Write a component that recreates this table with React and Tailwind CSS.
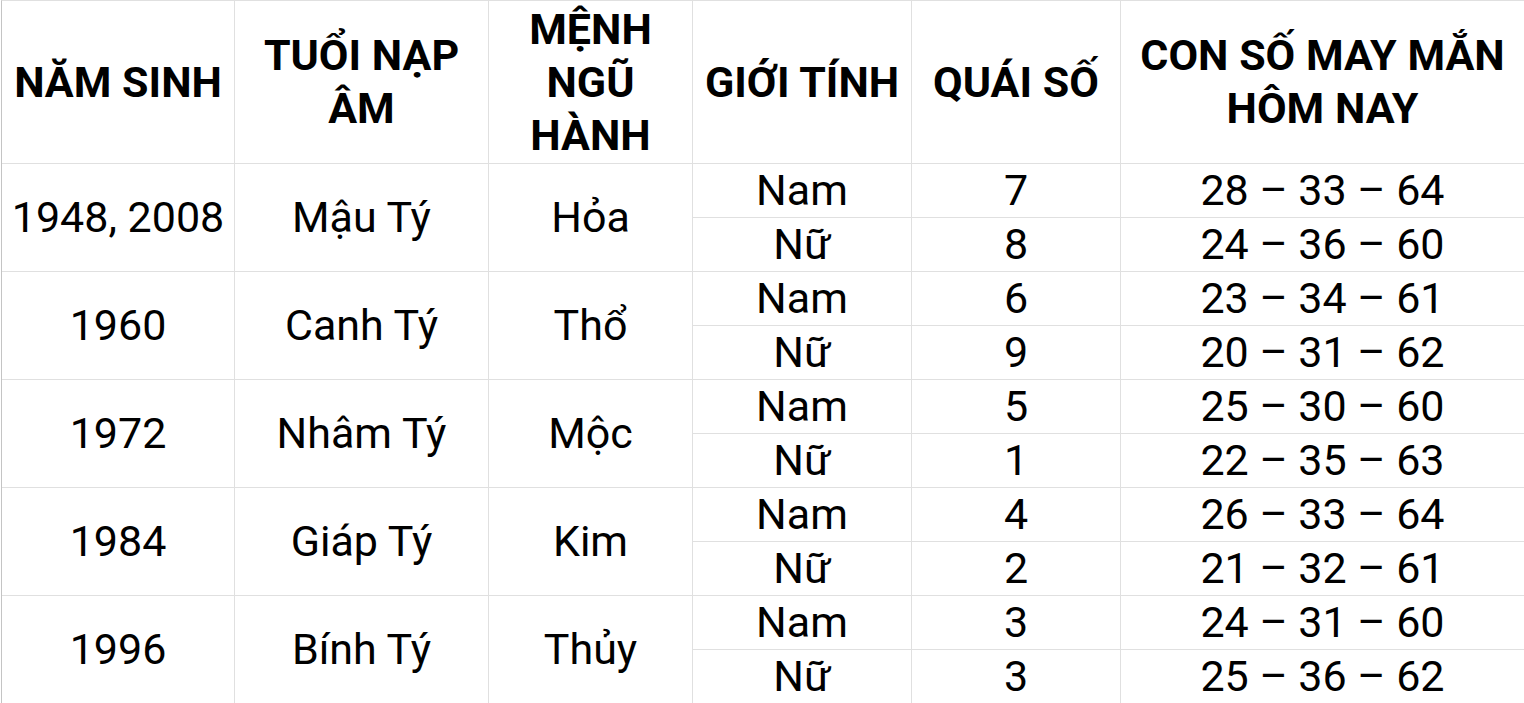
const groups = [
  {
    year: "1948, 2008",
    napAm: "Mậu Tý",
    menh: "Hỏa",
    items: [
      { gender: "Nam", quai: "7", lucky: "28 – 33 – 64" },
      { gender: "Nữ", quai: "8", lucky: "24 – 36 – 60" },
    ],
  },
  {
    year: "1960",
    napAm: "Canh Tý",
    menh: "Thổ",
    items: [
      { gender: "Nam", quai: "6", lucky: "23 – 34 – 61" },
      { gender: "Nữ", quai: "9", lucky: "20 – 31 – 62" },
    ],
  },
  {
    year: "1972",
    napAm: "Nhâm Tý",
    menh: "Mộc",
    items: [
      { gender: "Nam", quai: "5", lucky: "25 – 30 – 60" },
      { gender: "Nữ", quai: "1", lucky: "22 – 35 – 63" },
    ],
  },
  {
    year: "1984",
    napAm: "Giáp Tý",
    menh: "Kim",
    items: [
      { gender: "Nam", quai: "4", lucky: "26 – 33 – 64" },
      { gender: "Nữ", quai: "2", lucky: "21 – 32 – 61" },
    ],
  },
  {
    year: "1996",
    napAm: "Bính Tý",
    menh: "Thủy",
    items: [
      { gender: "Nam", quai: "3", lucky: "24 – 31 – 60" },
      { gender: "Nữ", quai: "3", lucky: "25 – 36 – 62" },
    ],
  },
];

const headers = [
  { lines: ["NĂM SINH"], width: "w-[233px]" },
  { lines: ["TUỔI NẠP", "ÂM"], width: "w-[254px]" },
  { lines: ["MỆNH", "NGŨ", "HÀNH"], width: "w-[204px]" },
  { lines: ["GIỚI TÍNH"], width: "w-[219px]" },
  { lines: ["QUÁI SỐ"], width: "w-[209px]" },
  { lines: ["CON SỐ MAY MẮN", "HÔM NAY"], width: "flex-1 border-r-0" },
];

const cell = "flex shrink-0 items-center justify-center text-center border-b border-r border-[#e0e0e0]";

export default function App() {
  return (
    <div className="h-[703px] w-[1524px] overflow-hidden bg-white pl-px font-['Roboto','Liberation_Sans',sans-serif] text-black">
      <div className="flex flex-col border-l border-t border-l-[#c4c4c4] border-t-[#e0e0e0]">
        <div className="flex h-[163px]">
          {headers.map((h, i) => (
            <div key={i} className={`${cell} ${h.width} flex-col text-[43px] font-bold leading-[53px]`}>
              {h.lines.map((line) => (
                <span key={line}>{line}</span>
              ))}
            </div>
          ))}
        </div>

        {groups.map((g) => (
          <div key={g.year} className="flex h-[108px] text-[43px] leading-none">
            <div className={`${cell} w-[233px]`}>{g.year}</div>
            <div className={`${cell} w-[254px]`}>{g.napAm}</div>
            <div className={`${cell} w-[204px]`}>{g.menh}</div>
            <div className="flex flex-1 flex-col">
              {g.items.map((item) => (
                <div key={item.gender} className="flex h-[54px]">
                  <div className={`${cell} w-[219px]`}>{item.gender}</div>
                  <div className={`${cell} w-[209px]`}>{item.quai}</div>
                  <div className={`${cell} flex-1 border-r-0`}>{item.lucky}</div>
                </div>
              ))}
            </div>
          </div>
        ))}
      </div>
    </div>
  );
}
